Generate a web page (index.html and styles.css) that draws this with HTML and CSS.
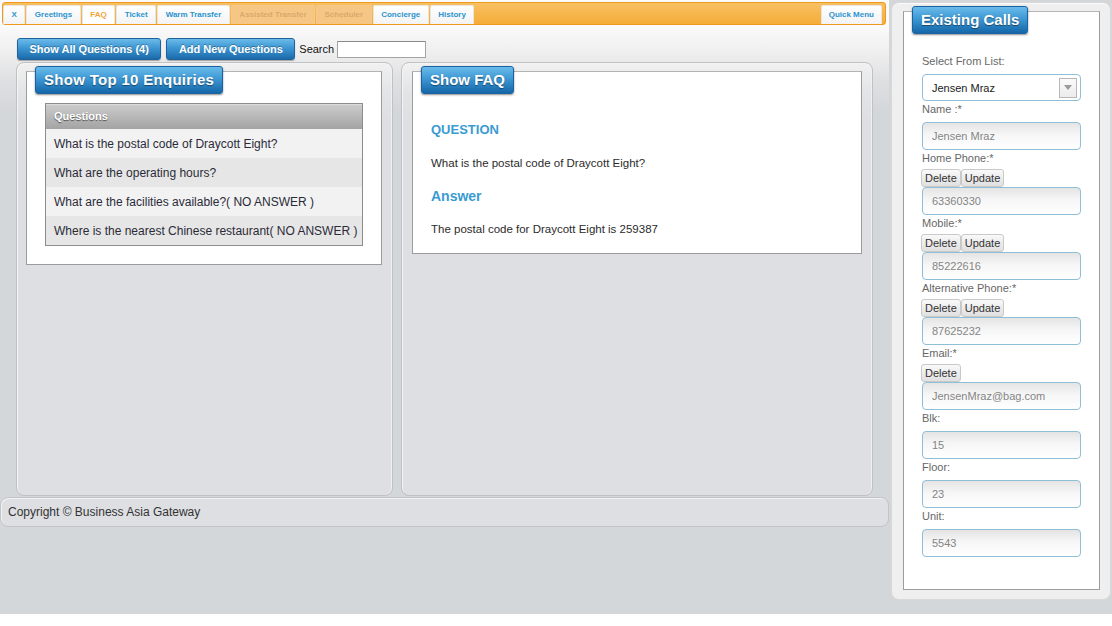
FILE: index.html
```html
<!DOCTYPE html>
<html>
<head>
<meta charset="utf-8">
<title>FAQ</title>
<link rel="stylesheet" href="styles.css">
</head>
<body>
<div class="page">
  <div class="main">
    <div class="tabbar">
      <div class="tabs">
        <div class="tab">X</div>
        <div class="tab">Greetings</div>
        <div class="tab active">FAQ</div>
        <div class="tab">Ticket</div>
        <div class="tab">Warm Transfer</div>
        <div class="tab disabled">Assisted Transfer</div>
        <div class="tab disabled">Scheduler</div>
        <div class="tab">Concierge</div>
        <div class="tab">History</div>
      </div>
      <div class="tab quick">Quick Menu</div>
    </div>
    <div class="toolbar">
      <button class="bbtn">Show All Questions (4)</button>
      <button class="bbtn">Add New Questions</button>
      <label class="search-label">Search</label>
      <input class="search" type="text">
    </div>
    <div class="panels">
      <div class="panel panel-left">
        <div class="fs">
          <div class="legend">Show Top 10 Enquiries</div>
          <div class="qtable">
            <div class="qhead">Questions</div>
            <div class="qrow">What is the postal code of Draycott Eight?</div>
            <div class="qrow alt">What are the operating hours?</div>
            <div class="qrow">What are the facilities available?( NO ANSWER )</div>
            <div class="qrow alt">Where is the nearest Chinese restaurant( NO ANSWER )</div>
          </div>
        </div>
      </div>
      <div class="panel panel-right">
        <div class="fs">
          <div class="legend">Show FAQ</div>
          <div class="faq-body">
            <div class="faq-h q">QUESTION</div>
            <div class="faq-t">What is the postal code of Draycott Eight?</div>
            <div class="faq-h a">Answer</div>
            <div class="faq-t">The postal code for Draycott Eight is 259387</div>
          </div>
        </div>
      </div>
    </div>
    <div class="footer">Copyright © Business Asia Gateway</div>
  </div>
  <div class="side">
    <div class="fs side-fs">
      <div class="legend">Existing Calls</div>
      <div class="form">
        <div class="lbl">Select From List:</div>
        <div class="select"><span>Jensen Mraz</span><span class="arrow"><svg width="8" height="5" viewBox="0 0 8 5"><path d="M0 0h8L4 5z" fill="#9a9a9a"/></svg></span></div>
        <div class="lbl">Name :*</div>
        <input class="inp" type="text" value="Jensen Mraz">
        <div class="lbl">Home Phone:*</div>
        <div class="btns"><button class="gbtn">Delete</button><button class="gbtn">Update</button></div>
        <input class="inp" type="text" value="63360330">
        <div class="lbl">Mobile:*</div>
        <div class="btns"><button class="gbtn">Delete</button><button class="gbtn">Update</button></div>
        <input class="inp" type="text" value="85222616">
        <div class="lbl">Alternative Phone:*</div>
        <div class="btns"><button class="gbtn">Delete</button><button class="gbtn">Update</button></div>
        <input class="inp" type="text" value="87625232">
        <div class="lbl">Email:*</div>
        <div class="btns"><button class="gbtn">Delete</button></div>
        <input class="inp" type="text" value="JensenMraz@bag.com">
        <div class="lbl">Blk:</div>
        <input class="inp" type="text" value="15">
        <div class="lbl">Floor:</div>
        <input class="inp" type="text" value="23">
        <div class="lbl">Unit:</div>
        <input class="inp" type="text" value="5543">
      </div>
    </div>
  </div>
</div>
</body>
</html>
```
FILE: styles.css
```css
* { box-sizing: border-box; }
html, body { margin: 0; padding: 0; }
body {
  background: #ffffff;
  font-family: "Liberation Sans", Arial, sans-serif;
  color: #333;
}
.page {
  display: flex;
  width: 1112px;
  height: 614px;
  background: #d4d7da;
}

/* ---------- main column ---------- */
.main {
  width: 889px;
  display: flex;
  flex-direction: column;
  padding-top: 2px;
  background: linear-gradient(#fbfbfb 0, #fbfbfb 25px, #ececec 58px, #dfe0e2 80px, #d4d7da 110px, #d4d7da 100%);
}

.tabbar {
  margin: 0 3px 0 2px;
  height: 23px;
  border: 1px solid #ee9a1e;
  border-radius: 3px;
  background: linear-gradient(#f8c062, #f5ad3a);
  display: flex;
  align-items: flex-end;
  justify-content: space-between;
  padding-right: 3px;
}
.tabs { display: flex; align-items: flex-end; gap: 1px; }
.tab {
  height: 19px;
  padding: 0 7.5px;
  border: 1px solid #e9e5df;
  border-bottom: none;
  border-radius: 2px 2px 0 0;
  background: linear-gradient(#ffffff, #f3f3f3);
  font-size: 8px;
  font-weight: bold;
  line-height: 18px;
  color: #2b93cf;
  white-space: nowrap;
}
.tab.active { color: #f3a236; background: #fff; }
.tab.disabled {
  background: #f6c784;
  border-color: #f6c98c;
  color: #d8aa6c;
}
.tab.quick { padding: 0 7px; }

.toolbar {
  height: 37px;
  padding: 13px 0 0 17px;
  display: flex;
  align-items: flex-start;
}
.bbtn {
  height: 22px;
  margin: 0 5px 0 0;
  padding: 0 11.5px;
  border: 1px solid #1f619b;
  border-radius: 3px;
  background: linear-gradient(#6bbbe9 0%, #3d96d2 45%, #1b6aaa 100%);
  box-shadow: 0 1px 1px rgba(0,0,0,0.3);
  font-family: "Liberation Sans", Arial, sans-serif;
  font-size: 11px;
  font-weight: bold;
  line-height: 20px;
  color: #fff;
  text-shadow: 0 -1px 0 rgba(0,0,0,0.3);
}
.search-label {
  margin-left: -1px;
  font-size: 11px;
  line-height: 22px;
  color: #111;
}
.search {
  margin: 3px 0 0 3px;
  width: 89px;
  height: 17px;
  border: 1px solid #a4a4a4;
  border-top-color: #8a8a8a;
  background: #fff;
  padding: 0;
}

.panels {
  display: flex;
  gap: 8px;
  margin: 0 16px;
  height: 434px;
}
.panel {
  border: 1px solid #bfc1c4;
  border-radius: 8px;
  box-shadow: inset 1px 1px 0 #f4f4f4, inset -1px 0 0 #f0f0f0;
  background: linear-gradient(#f1f1f1 0, #e3e4e6 30px, #dedfe2 60px, #dedfe2 100%);
  padding: 8px 10px 0 9px;
}
.panel-left { width: 377px; }
.panel-right { width: 472px; padding-left: 10px; }

.fs {
  background: #fff;
  border: 1px solid #9c9c9c;
  border-top-color: #b4b4b4;
}
.legend {
  width: max-content;
  height: 28px;
  margin: -6px 0 0 8px;
  padding: 0 8px;
  border: 1px solid #1c62a0;
  border-radius: 3px;
  background: linear-gradient(#6abbea 0%, #3d98d4 45%, #1466a8 100%);
  box-shadow: 0 1px 2px rgba(0,0,0,0.45);
  font-size: 15px;
  font-weight: bold;
  line-height: 25px;
  color: #fff;
  text-shadow: 0 1px 1px rgba(0,0,0,0.45);
}
.panel-left .legend { letter-spacing: 0.3px; }

.qtable {
  margin: 9px 18px 18px 18px;
  border: 1px solid #8c8c8c;
}
.qhead {
  height: 25px;
  padding-left: 8px;
  background: linear-gradient(#cdcdcd, #a3a3a3);
  box-shadow: inset 0 1px 0 #dcdcdc;
  font-size: 11px;
  font-weight: bold;
  line-height: 25px;
  color: #fff;
  text-shadow: 0 1px 1px rgba(0,0,0,0.55);
}
.qrow {
  height: 29px;
  padding-left: 8px;
  background: #f2f2f2;
  font-size: 12px;
  line-height: 30px;
  color: #2b2b38;
}
.qrow.alt { background: #e6e6e6; }

.faq-body { padding: 28px 18px 17px 18px; }
.faq-h {
  font-weight: bold;
  color: #3a9bd2;
  line-height: 16px;
}
.faq-h.q { font-size: 13px; }
.faq-h.a { font-size: 14px; margin-top: 18px; }
.faq-t {
  margin-top: 18px;
  font-size: 11.5px;
  line-height: 14px;
  color: #2b2b2b;
}

.footer {
  margin-top: 1px;
  height: 30px;
  border: 1px solid #c2c4c6;
  border-radius: 8px;
  box-shadow: inset 1px 1px 0 #f2f2f2;
  background: #dedfe2;
  padding-left: 7px;
  font-size: 12px;
  line-height: 28px;
  color: #333;
}

/* ---------- side column ---------- */
.side {
  width: 220px;
  height: 598px;
  margin: 2px 0 0 2px;
  border: 1px solid #d8d8d8;
  border-radius: 8px;
  background: #efefef;
  box-shadow: inset 0 1px 0 #fafafa;
  padding: 8px 10px 9px 11px;
  display: flex;
  flex-direction: column;
}
.side-fs { flex: 1; }
.form { padding: 19px 0 0 18px; }
.lbl {
  height: 17px;
  font-size: 11px;
  line-height: 17px;
  color: #676767;
}
.select {
  margin-top: 4px;
  width: 159px;
  height: 27px;
  border: 1px solid #8ebfd7;
  border-radius: 4px;
  background: #fff;
  display: flex;
  align-items: center;
  padding-left: 9px;
  font-size: 11px;
  color: #1a1a1a;
}
.select .arrow {
  margin-left: auto;
  margin-right: 3px;
  width: 18px;
  height: 20px;
  border: 1px solid #b8b8b8;
  background: linear-gradient(#fafafa, #ececec);
  display: flex;
  align-items: center;
  justify-content: center;
}
.inp {
  display: block;
  margin: 4px 0 0 0;
  width: 159px;
  height: 28px;
  border: 1px solid #8ebfd7;
  border-radius: 4px;
  background: linear-gradient(#e4e4e4 0, #f6f6f6 45%, #ffffff 100%);
  padding: 0 0 0 9px;
  font-family: "Liberation Sans", Arial, sans-serif;
  font-size: 11px;
  color: #858585;
  outline: none;
}
.btns + .inp { margin-top: 0; }
.btns {
  height: 20px;
  margin-left: -1px;
  display: flex;
  align-items: flex-end;
}
.gbtn {
  height: 18px;
  margin: 0;
  padding: 0 3px;
  border: 1px solid #c9c9c9;
  border-radius: 3px;
  background: linear-gradient(#f9f9f9, #e0e0e0);
  font-family: "Liberation Sans", Arial, sans-serif;
  font-size: 11px;
  line-height: 16px;
  color: #333;
}
```
